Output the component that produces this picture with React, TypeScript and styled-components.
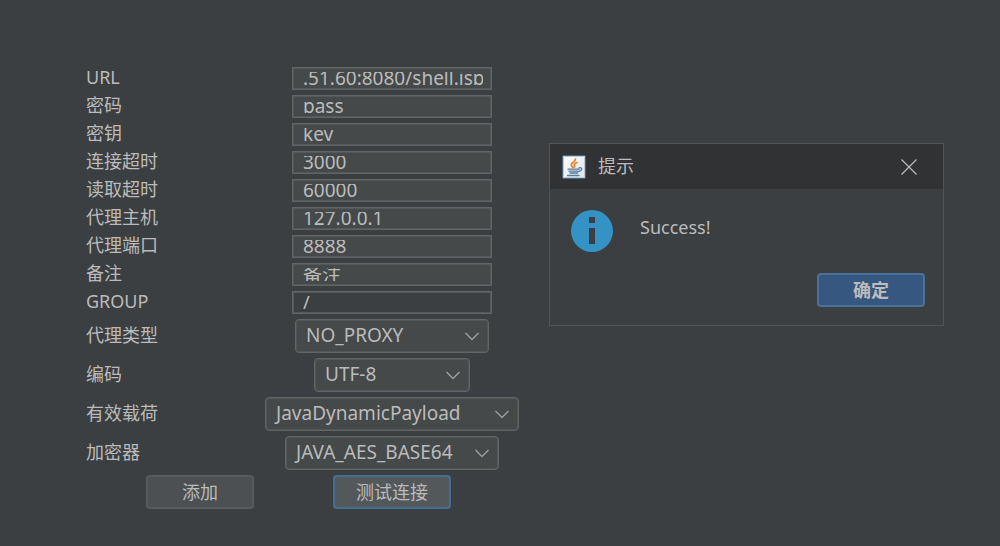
import React from "react";
import styled, { createGlobalStyle } from "styled-components";

const GlobalStyle = createGlobalStyle`
  *, *::before, *::after { box-sizing: border-box; }
  body {
    margin: 0;
    background: #3c3f41;
    color: #bbbbbb;
    font: 400 18px/22px "Noto Sans", "Noto Sans CJK SC", sans-serif;
  }
  button, input, select { font: inherit; color: inherit; margin: 0; }
`;

const Page = styled.main`
  display: flex;
  flex-wrap: wrap;
  align-items: flex-start;
  justify-content: space-between;
  gap: 30px;
  min-height: 100vh;
  padding: 67px 56px 37px 86px;
`;

const Form = styled.form`
  display: grid;
  grid-template-columns: 179px 254px;
  align-items: center;
  justify-items: center;
  row-gap: 5px;
`;

const Label = styled.label`
  justify-self: start;
  line-height: 20px;
  padding-bottom: 3px;
`;

const Field = styled.div<{ $plain?: boolean }>`
  display: flex;
  width: 200px;
  padding: 4px 8px 4px 10px;
  border: 1px solid #646464;
  box-shadow: inset 0 0 0 1px #55585a;
  background: ${(p) => (p.$plain ? "#3c3f41" : "#45494a")};
`;

const TextInput = styled.input`
  display: block;
  width: 100%;
  height: 13px;
  padding: 0 0 1px;
  border: 0;
  outline: 0;
  overflow: clip;
  font-size: 19px;
  line-height: 12px;
  background: transparent;
`;

const SelectBox = styled.div<{ $width: number }>`
  display: grid;
  align-items: center;
  width: ${(p) => p.$width}px;
  svg {
    grid-area: 1 / 1;
    justify-self: end;
    margin-right: 9px;
    pointer-events: none;
  }
`;

const Select = styled.select`
  grid-area: 1 / 1;
  appearance: none;
  width: 100%;
  height: 34px;
  padding: 0 30px 2px 8px;
  border: 1px solid #646464;
  border-radius: 4px;
  box-shadow: inset 0 0 0 1px #515556;
  font-size: 19px;
  line-height: 30px;
  text-indent: 2px;
  background: #45494a;
`;

const Button = styled.button<{ $variant?: "focus" | "primary" }>`
  height: 34px;
  padding: 0 ${(p) => (p.$variant === "focus" ? 21 : 34)}px;
  border: 2px solid
    ${(p) => (p.$variant === "focus" ? "#466d94" : p.$variant === "primary" ? "#4a7197" : "#585b5c")};
  border-radius: 4px;
  background: ${(p) =>
    p.$variant === "focus" ? "#53585a" : p.$variant === "primary" ? "#365880" : "#4c5052"};
  font-weight: ${(p) => (p.$variant === "primary" ? 700 : 400)};
`;

const AddButton = styled(Button)`
  justify-self: end;
  margin-right: 11px;
`;

const Dialog = styled.section`
  flex: 0 1 395px;
  margin-top: 76px;
  border: 1px solid #515456;
`;

const TitleBar = styled.header`
  display: flex;
  align-items: center;
  gap: 12px;
  height: 45px;
  padding: 0 22px 0 12px;
  background: #313233;
`;

const Title = styled.h1`
  flex: 1;
  margin: 0;
  padding-bottom: 2px;
  font-size: 18px;
  font-weight: 400;
`;

const CloseButton = styled.button`
  display: flex;
  padding: 4px;
  border: 0;
  background: none;
`;

const Message = styled.div`
  display: flex;
  gap: 26px;
  padding: 20px 20px 0 21px;
  p { margin: 7px 0 0; }
`;

const Actions = styled.footer`
  display: flex;
  justify-content: flex-end;
  padding: 21px 18px 18px;
`;

const Chevron = () => (
  <svg width="16" height="10" viewBox="0 0 16 10" fill="none" stroke="#9a9da0" strokeWidth="1.5" aria-hidden="true">
    <path d="M1.500 2 8 8.500l6.500-6.500" />
  </svg>
);

const JavaIcon = () => (
  <svg width="24" height="24" viewBox="0 0 24 24" fill="none" aria-hidden="true">
    <defs>
      <linearGradient id="tile" x1="0" y1="0" x2="1" y2="1">
        <stop offset="0" stopColor="#ffffff" />
        <stop offset="1" stopColor="#dce3e9" />
      </linearGradient>
    </defs>
    <rect x="0.500" y="0.500" width="23" height="23" rx="1.500" fill="url(#tile)" stroke="#45667d" />
    <rect x="1.500" y="1.500" width="21" height="21" rx="1" stroke="#b9cad6" />
    <path d="M13.500 4c.5 2.500-4.500 3.500-4.300 5.800.2 1.400 1.300 1.600 1.500 2.700M15 7.500c-2 .7-3.300 1.700-2.600 2.700.6.900.2 1.300-.4 2" stroke="#e8812c" strokeWidth="1.700" strokeLinecap="round" />
    <path d="M6 14.200h11M7 16.200h9M8 18h7.500M5.500 20.500h11.500M17 12.800c4.200-.7 3.200 3.200-.8 3.900" stroke="#557b99" strokeWidth="1.300" strokeLinecap="round" />
  </svg>
);

const InfoIcon = () => (
  <svg width="43" height="43" viewBox="0 0 43 43" aria-hidden="true">
    <circle cx="21" cy="22" r="21" fill="#3592c4" />
    <path fill="#3c3f41" d="M18 8h6v6h-6zM18 19h6v16h-6z" />
  </svg>
);

const fields = [
  { id: "url", label: "URL", value: ".51.60:8080/shell.jsp" },
  { id: "password", label: "密码", value: "pass" },
  { id: "key", label: "密钥", value: "key" },
  { id: "connect-timeout", label: "连接超时", value: "3000" },
  { id: "read-timeout", label: "读取超时", value: "60000" },
  { id: "proxy-host", label: "代理主机", value: "127.0.0.1" },
  { id: "proxy-port", label: "代理端口", value: "8888" },
  { id: "remark", label: "备注", value: "备注" },
  { id: "group", label: "GROUP", value: "/", plain: true },
];

const selects = [
  { id: "proxy-type", label: "代理类型", value: "NO_PROXY", width: 194 },
  { id: "encoding", label: "编码", value: "UTF-8", width: 156 },
  { id: "payload", label: "有效载荷", value: "JavaDynamicPayload", width: 254 },
  { id: "cryption", label: "加密器", value: "JAVA_AES_BASE64", width: 214 },
];

export default function App() {
  return (
    <>
      <GlobalStyle />
      <Page>
        <Form>
          {fields.map((f) => (
            <React.Fragment key={f.id}>
              <Label htmlFor={f.id}>{f.label}</Label>
              <Field $plain={f.plain}>
                <TextInput id={f.id} defaultValue={f.value} readOnly={f.plain} spellCheck={false} />
              </Field>
            </React.Fragment>
          ))}
          {selects.map((s) => (
            <React.Fragment key={s.id}>
              <Label htmlFor={s.id}>{s.label}</Label>
              <SelectBox $width={s.width}>
                <Select id={s.id}>
                  <option>{s.value}</option>
                </Select>
                <Chevron />
              </SelectBox>
            </React.Fragment>
          ))}
          <AddButton type="button">添加</AddButton>
          <Button type="button" $variant="focus">测试连接</Button>
        </Form>
        <Dialog role="dialog" aria-labelledby="dialog-title">
          <TitleBar>
            <JavaIcon />
            <Title id="dialog-title">提示</Title>
            <CloseButton type="button" aria-label="关闭">
              <svg width="16" height="16" viewBox="0 0 16 16" stroke="#bbbbbb" strokeWidth="1.200" aria-hidden="true">
                <path d="m.5.5 15 15M15.500.5l-15 15" />
              </svg>
            </CloseButton>
          </TitleBar>
          <Message>
            <InfoIcon />
            <p>Success!</p>
          </Message>
          <Actions>
            <Button type="button" $variant="primary">确定</Button>
          </Actions>
        </Dialog>
      </Page>
    </>
  );
}
